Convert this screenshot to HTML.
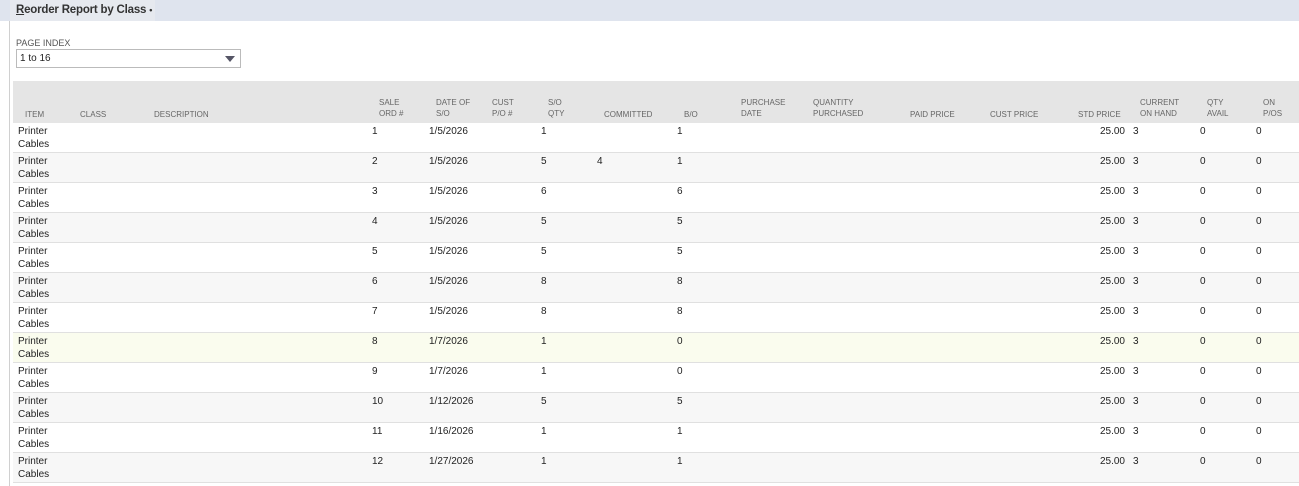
<!DOCTYPE html>
<html><head><style>
*{margin:0;padding:0;box-sizing:border-box}
body{width:1299px;height:486px;overflow:hidden;background:#fff;font-family:"Liberation Sans",sans-serif;color:#222;position:relative}
.top{position:absolute;left:0;top:0;width:1299px;height:21px;background:#dfe4ee}
.tab{position:absolute;left:10px;top:0;width:145px;height:21px;background:#e6e9ef;font-size:11.5px;font-weight:bold;color:#333;padding:4px 0 0 6px;white-space:nowrap;letter-spacing:-0.2px}
.lb{position:absolute;left:9px;top:21px;width:1px;height:465px;background:#d0d0d0}
.pl{position:absolute;left:16px;top:38px;font-size:9px;color:#555}
.sel{position:absolute;left:16px;top:49px;width:225px;height:19px;border:1px solid #bbb;font-size:10px;padding:3px 3px}
.arr{position:absolute;right:5px;top:6px;width:0;height:0;border-left:5px solid transparent;border-right:5px solid transparent;border-top:6px solid #556}
.hd{position:absolute;left:13px;top:81px;width:1286px;height:42px;background:#e5e5e5}
.h{position:absolute;font-size:8px;color:#666;line-height:11px}
.row{position:absolute;left:13px;width:1286px;height:30px;border-bottom:1px solid #e0e0e0}
.c{position:absolute;top:2px;font-size:10px;line-height:13px;color:#222}
</style></head><body>
<div class="top"></div>
<div class="tab"><u>R</u>eorder Report by Class <span style="font-size:9px">•</span></div>
<div class="lb"></div>
<div class="pl">PAGE INDEX</div>
<div class="sel">1 to 16<div class="arr"></div></div>
<div class="hd">
<div class="h" style="left:12px;top:28px">ITEM</div>
<div class="h" style="left:67px;top:28px">CLASS</div>
<div class="h" style="left:141px;top:28px">DESCRIPTION</div>
<div class="h" style="left:366px;top:16px">SALE<br>ORD #</div>
<div class="h" style="left:423px;top:16px">DATE OF<br>S/O</div>
<div class="h" style="left:479px;top:16px">CUST<br>P/O #</div>
<div class="h" style="left:535px;top:16px">S/O<br>QTY</div>
<div class="h" style="left:591px;top:28px">COMMITTED</div>
<div class="h" style="left:671px;top:28px">B/O</div>
<div class="h" style="left:728px;top:16px">PURCHASE<br>DATE</div>
<div class="h" style="left:800px;top:16px">QUANTITY<br>PURCHASED</div>
<div class="h" style="left:897px;top:28px">PAID PRICE</div>
<div class="h" style="left:977px;top:28px">CUST PRICE</div>
<div class="h" style="left:1065px;top:28px">STD PRICE</div>
<div class="h" style="left:1127px;top:16px">CURRENT<br>ON HAND</div>
<div class="h" style="left:1194px;top:16px">QTY<br>AVAIL</div>
<div class="h" style="left:1250px;top:16px">ON<br>P/OS</div>
</div>
<div id="rows"></div>
<script>
var d=[[1,"1/5/2026",1,"",1],[2,"1/5/2026",5,"4",1],[3,"1/5/2026",6,"",6],[4,"1/5/2026",5,"",5],[5,"1/5/2026",5,"",5],[6,"1/5/2026",8,"",8],[7,"1/5/2026",8,"",8],[8,"1/7/2026",1,"",0],[9,"1/7/2026",1,"",0],[10,"1/12/2026",5,"",5],[11,"1/16/2026",1,"",1],[12,"1/27/2026",1,"",1]];
var h="";
d.forEach(function(r,i){
var bg=i==7?"#fafcee":(i%2?"#f7f7f7":"#fff");
h+='<div class="row" style="top:'+(123+i*30)+'px;background:'+bg+'">'+
'<div class="c" style="left:5px">Printer<br>Cables</div>'+
'<div class="c" style="left:359px">'+r[0]+'</div>'+
'<div class="c" style="left:416px">'+r[1]+'</div>'+
'<div class="c" style="left:528px">'+r[2]+'</div>'+
'<div class="c" style="left:584px">'+r[3]+'</div>'+
'<div class="c" style="left:664px">'+r[4]+'</div>'+
'<div class="c" style="left:1070px;width:42px;text-align:right">25.00</div>'+
'<div class="c" style="left:1120px">3</div>'+
'<div class="c" style="left:1187px">0</div>'+
'<div class="c" style="left:1243px">0</div></div>';
});
document.getElementById("rows").innerHTML=h;
</script>
</body></html>
